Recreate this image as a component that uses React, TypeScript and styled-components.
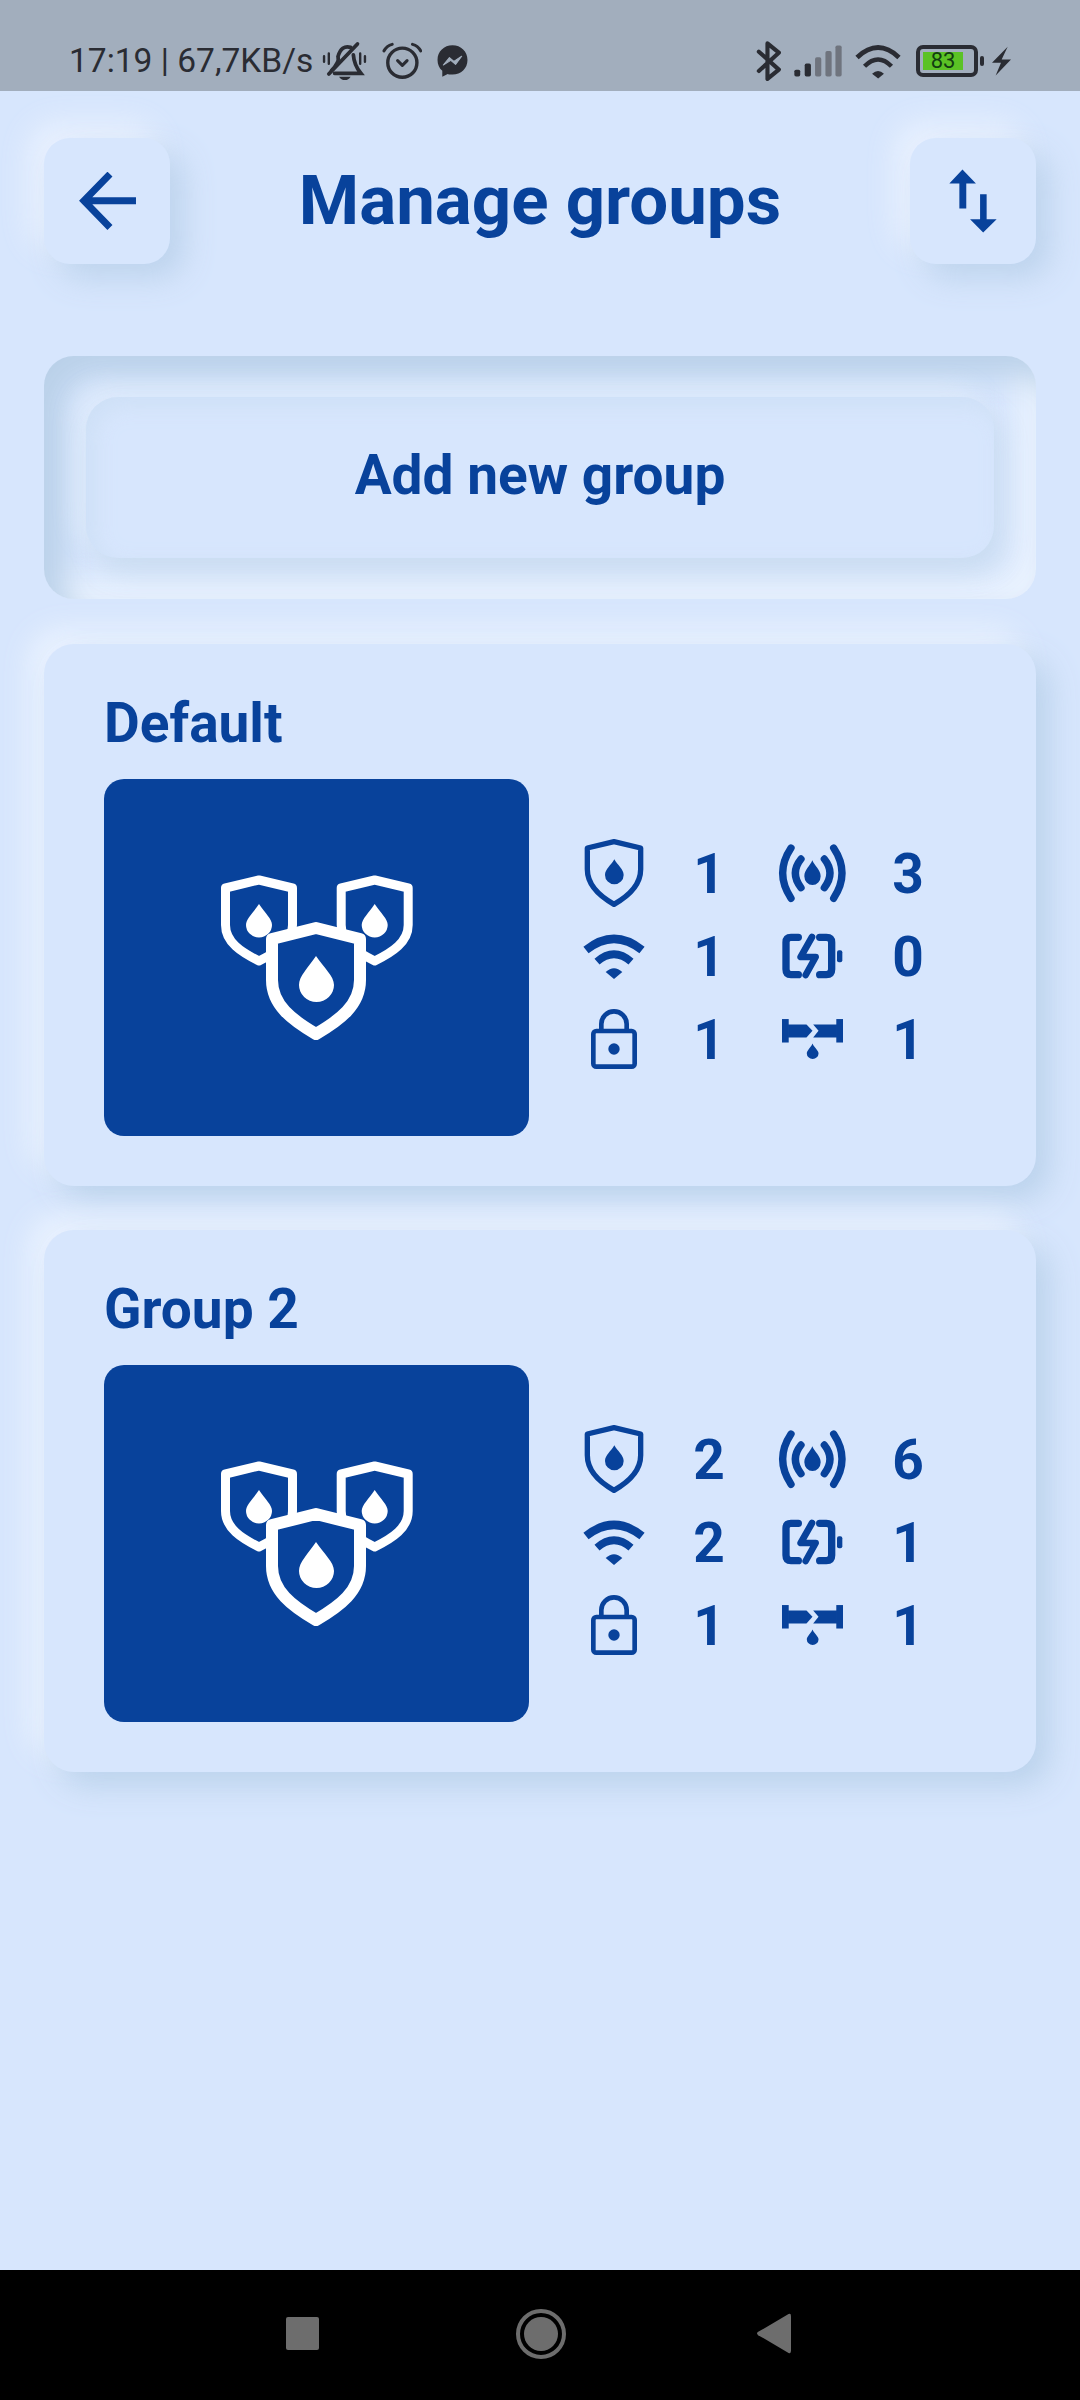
import styled, { createGlobalStyle } from "styled-components";

const BLUE = "#08429b";
const PAGE = "#d7e6fd";
const INK = "#2a2c33";

const GlobalStyle = createGlobalStyle`
    html, body {
        margin: 0;
        padding: 0;
        background: ${PAGE};
    }
    * {
        box-sizing: border-box;
    }
`

const Screen = styled.div`
    width: 1080px;
    height: 2400px;
    display: flex;
    flex-direction: column;
    background: ${PAGE};
    font-family: Roboto, "Liberation Sans", sans-serif;
    overflow: hidden;
`

const StatusBar = styled.div`
    height: 91px;
    flex: none;
    padding: 31px 69px 0 69px;
    display: flex;
    justify-content: space-between;
    align-items: center;
    background: #a2aebd;
    color: ${INK};
`

const StatusGroup = styled.div`
    display: flex;
    align-items: center;
`

const StatusText = styled.span`
    font-size: 33.5px;
    line-height: 40px;
    margin-right: 9px;
`

const StatusGlyph = styled.svg<{ $gap?: number }>`
    display: block;
    flex: none;
    margin-left: ${props => props.$gap ?? 0}px;
`

const Battery = styled.div`
    display: flex;
    align-items: center;
    margin-left: 15px;
`

const BatteryShell = styled.div`
    width: 62px;
    height: 32px;
    border: 4px solid ${INK};
    border-radius: 7px;
    display: flex;
    align-items: center;
    padding-left: 3px;
`

const BatteryFill = styled.div`
    width: 40px;
    height: 18px;
    background: #5bc225;
    color: #123c12;
    font-size: 22px;
    line-height: 18px;
    text-align: center;
`

const BatteryNub = styled.div`
    width: 4px;
    height: 10px;
    margin-left: 2px;
    border-radius: 2px;
    background: ${INK};
`

const Header = styled.div`
    margin: 47px 44px 0 44px;
    display: flex;
    justify-content: space-between;
    align-items: center;
`

const SquareButton = styled.div`
    width: 126px;
    height: 126px;
    display: flex;
    justify-content: center;
    align-items: center;
    border-radius: 26px;
    background: ${PAGE};
    box-shadow: 14px 14px 30px rgba(184, 208, 234, 0.85), -14px -14px 30px rgba(238, 245, 255, 0.85);
`

const PageTitle = styled.h1`
    margin: 0;
    font-size: 69px;
    line-height: 80px;
    font-weight: 700;
    color: ${BLUE};
`

const AddWell = styled.div`
    margin: 92px 44px 0 44px;
    height: 243px;
    padding: 41px 42px;
    border-radius: 30px;
    background: ${PAGE};
    box-shadow: inset 20px 20px 30px rgba(184, 208, 232, 0.95), inset -20px -20px 30px rgba(234, 242, 254, 0.95);
`

const AddButton = styled.div`
    height: 161px;
    padding-bottom: 5px;
    display: flex;
    justify-content: center;
    align-items: center;
    border-radius: 32px;
    background: ${PAGE};
    color: ${BLUE};
    font-size: 55px;
    font-weight: 700;
    box-shadow: inset 8px 8px 20px rgba(200, 220, 242, 0.6), 8px 14px 24px rgba(196, 216, 236, 0.7), -10px -10px 22px rgba(226, 238, 252, 0.7);
`

const CardList = styled.div`
    margin: 45px 44px 0 44px;
    display: flex;
    flex-direction: column;
    gap: 44px;
`

const Card = styled.div`
    height: 542px;
    padding: 49px 0 0 60px;
    border-radius: 30px;
    background: ${PAGE};
    box-shadow: 14px 14px 30px rgba(184, 208, 234, 0.9), -14px -14px 30px rgba(238, 245, 255, 0.9);
`

const CardTitle = styled.h2`
    margin: 0 0 26px;
    font-size: 55px;
    line-height: 60px;
    font-weight: 700;
    color: ${BLUE};
`

const CardBody = styled.div`
    display: flex;
    align-items: flex-start;
`

const GroupImage = styled.div`
    width: 425px;
    height: 357px;
    flex: none;
    display: flex;
    justify-content: center;
    align-items: center;
    border-radius: 20px;
    background: ${BLUE};
`

const StatsGrid = styled.div`
    margin: 52px 0 0 42px;
    display: grid;
    grid-template-columns: 86px 104px 102px 90px;
    grid-auto-rows: 83px;
    align-items: center;
    justify-items: center;
`

const StatValue = styled.span`
    padding-top: 3px;
    font-size: 55px;
    line-height: 80px;
    font-weight: 700;
    color: ${BLUE};
`

const NavBar = styled.div`
    margin-top: auto;
    height: 130px;
    flex: none;
    padding: 43px 289px 46px 286px;
    display: flex;
    justify-content: space-between;
    align-items: center;
    background: #000;
`

const NavSquare = styled.div`
    width: 33px;
    height: 33px;
    border-radius: 2px;
    background: #6d6d6d;
`

const NavHome = styled.div`
    width: 50px;
    height: 50px;
    margin-left: 6px;
    padding: 4px;
    border: 4px solid #6d6d6d;
    border-radius: 50%;
    background-clip: content-box;
    background-color: #6d6d6d;
`

const Shield: React.FC<{ d: string; drop: string; width: number }> = props => (<>
    <path d={props.d} fill={BLUE} stroke="#fff" strokeWidth={props.width} strokeLinejoin="round"/>
    <path d={props.drop} fill="#fff"/>
</>)

const GroupIcon = () => (<svg width="194" height="166" viewBox="40 55 194 166">
    <Shield width={9}
            d="M79 60 L112.5 68 V105 C112.5 122 97 132 79 141 C61 132 45.5 122 45.5 105 V68 Z"
            drop="M79 84 C73 93 66 99 66 105 A13 12.5 0 0 0 92 105 C92 99 85 93 79 84 Z"/>
    <Shield width={9}
            d="M194.7 60 L228.2 68 V105 C228.2 122 212.7 132 194.7 141 C176.7 132 161.2 122 161.2 105 V68 Z"
            drop="M194.7 84 C188.7 93 181.7 99 181.7 105 A13 12.5 0 0 0 207.7 105 C207.7 99 200.7 93 194.7 84 Z"/>
    <Shield width={12}
            d="M136 108 L180 119 V160 C180 185 160 200 136 214 C112 200 92 185 92 160 V119 Z"
            drop="M136 136 C128 148 119 156 119 165 A17.5 17 0 0 0 154 165 C154 156 144 148 136 136 Z"/>
</svg>)

// the stat icons are drawn in 3x units, so every svg is a third of its viewBox
const StatShield = () => (<svg width="60" height="70" viewBox="69 56 180 210">
    <path d="M159 67 L239 86 V150 C239 200 200 232 159 255 C118 232 79 200 79 150 V86 Z"
          fill="none" stroke={BLUE} strokeWidth="16" strokeLinejoin="round"/>
    <path d="M160 120 C150 138 132 150 132 167 A28 28 0 0 0 188 167 C188 150 170 138 160 120 Z" fill={BLUE}/>
</svg>)

const StatSensor = () => (<svg width="72" height="60" viewBox="645 70 216 180">
    <g fill="none" stroke={BLUE} strokeWidth="22" strokeLinecap="round">
        <path d="M690 85 Q640 160 690 236"/>
        <path d="M818 85 Q868 160 818 236"/>
        <path d="M720 118 Q686 160 720 204"/>
        <path d="M790 118 Q824 160 790 204"/>
    </g>
    <path d="M754 122 C748 138 730 150 730 170 A24.5 26 0 0 0 779 170 C779 150 760 138 754 122 Z" fill={BLUE}/>
</svg>)

const StatWifi = () => (<svg width="64" height="46" viewBox="64 344 192 138">
    <g fill="none" stroke={BLUE}>
        <path d="M76 395 Q160 328 244 395" strokeWidth="25"/>
        <path d="M109 430 Q160 386 211 430" strokeWidth="23"/>
    </g>
    <path d="M135 461 Q160 438 185 461 L160 482 Z" fill={BLUE}/>
</svg>)

const StatCharge = () => (<svg width="62" height="46" viewBox="670 342 186 138">
    <g fill="none" stroke={BLUE} strokeLinecap="round" strokeLinejoin="round">
        <path d="M722 355 H700 Q685 355 685 370 V451 Q685 467 700 467 H722" strokeWidth="22"/>
        <path d="M786 355 H806 Q822 355 822 370 V451 Q822 467 806 467 H786" strokeWidth="22"/>
        <path d="M763 354 L729 414 H774 L744 468" strokeWidth="20"/>
    </g>
    <rect x="838" y="394" width="16" height="36" rx="6" fill={BLUE}/>
</svg>)

const StatLock = () => (<svg width="46" height="60" viewBox="91 565 138 180">
    <g fill="none" stroke={BLUE} strokeWidth="14">
        <rect x="98" y="631" width="124" height="107" rx="9"/>
        <path d="M122 630 V610 A38 38 0 0 1 198 610 V630"/>
    </g>
    <circle cx="160" cy="685" r="17" fill={BLUE}/>
</svg>)

const StatLeak = () => (<svg width="61" height="40" viewBox="662 597 182 119">
    <g fill={BLUE}>
        <rect x="662" y="597" width="20" height="70"/>
        <rect x="824" y="597" width="20" height="70"/>
        <path d="M680 613 H735 L753 632 L735 652 H680 Z"/>
        <path d="M826 613 H755 L771 632 L755 652 H826 Z"/>
        <path d="M753 670 C747 684 736 690 736 700 A17.5 16 0 0 0 771 700 C771 690 759 684 753 670 Z"/>
    </g>
</svg>)

const BackIcon = () => (<svg width="57" height="58" viewBox="230 520 162 165">
    <path d="M392 602 H244 M318 526 L244 602 L318 678" fill="none" stroke={BLUE} strokeWidth="20"/>
</svg>)

const SortIcon = () => (<svg width="48" height="64" viewBox="1187 509 139 185">
    <path d="M1188 551 L1226 510 L1265 551 H1237 V623 H1217 V551 Z" fill={BLUE}/>
    <path d="M1277 582 H1296 V654 H1325 L1286 693 L1248 654 H1277 Z" fill={BLUE}/>
</svg>)

const BellOffIcon = () => (<StatusGlyph width="45" height="40" viewBox="938 120 132 116">
    <g fill="none" stroke={INK} strokeWidth="11" strokeLinecap="round">
        <path d="M966 206 Q990 180 985 165 Q995 130 1022 138"/>
        <path d="M1030 160 Q1032 190 1052 214 H975"/>
        <path d="M958 216 L1042 128"/>
        <path d="M958 156 V186 M944 164 V180 M1050 156 V186 M1064 164 V180" strokeWidth="7"/>
    </g>
    <path d="M988 224 H1022 Q1016 234 1005 234 Q994 234 988 224 Z" fill={INK}/>
</StatusGlyph>)

const AlarmIcon = () => (<StatusGlyph $gap={15} width="40" height="38" viewBox="1110 119 118 112">
    <g fill="none" stroke={INK} strokeLinecap="round" strokeLinejoin="round">
        <circle cx="1170" cy="180" r="43" strokeWidth="10"/>
        <path d="M1116 145 Q1124 130 1140 126 M1224 145 Q1216 130 1200 126" strokeWidth="9"/>
        <path d="M1156 174 L1170 188 L1184 174" strokeWidth="9"/>
    </g>
</StatusGlyph>)

const MessengerIcon = () => (<StatusGlyph $gap={15} width="31" height="32" viewBox="1274 131 90 94">
    <path d="M1319 132 C1294 132 1275 150 1275 175 C1275 188 1280 199 1289 207 V224 L1305 216 C1310 218 1314 218 1319 218 C1344 218 1363 200 1363 175 C1363 150 1344 132 1319 132 Z" fill={INK}/>
    <path d="M1292 190 L1310 168 L1323 179 L1346 164 L1328 188 L1314 176 Z" fill="#a2aebd" stroke="#a2aebd" strokeWidth="3" strokeLinejoin="round"/>
</StatusGlyph>)

const BluetoothIcon = () => (<StatusGlyph width="25" height="41" viewBox="625 117 72 119">
    <path d="M633 148 L691 200 L658 227 V124 L691 151 L633 204" fill="none" stroke={INK} strokeWidth="12" strokeLinecap="round" strokeLinejoin="round"/>
</StatusGlyph>)

const SignalIcon = () => (<StatusGlyph $gap={13} width="48" height="32" viewBox="738 133 139 92">
    <g>
        <rect x="739" y="204" width="17" height="20" rx="5" fill={INK}/>
        <rect x="769" y="186" width="18" height="38" rx="5" fill={INK}/>
        <rect x="799" y="168" width="18" height="56" rx="5" fill="#6f747e"/>
        <rect x="829" y="150" width="18" height="74" rx="5" fill="#6f747e"/>
        <rect x="858" y="134" width="18" height="90" rx="5" fill="#6f747e"/>
    </g>
</StatusGlyph>)

const WifiIcon = () => (<StatusGlyph $gap={13} width="46" height="35" viewBox="914 127 135 102">
    <g fill="none" stroke={INK}>
        <path d="M920 166 Q982 108 1043 166" strokeWidth="14"/>
        <path d="M942 192 Q982 152 1021 192" strokeWidth="13"/>
    </g>
    <path d="M964 214 Q982 198 999 214 L982 228 Z" fill={INK}/>
</StatusGlyph>)

const ChargeIcon = () => (<StatusGlyph $gap={8} width="19" height="30" viewBox="1311 132 57 89">
    <path d="M1358 134 L1340 172 H1368 L1322 220 L1338 182 H1311 Z" fill={INK}/>
</StatusGlyph>)

const NavBack = () => (<svg width="34" height="41" viewBox="0 0 28 37" preserveAspectRatio="none">
    <path d="M26 1 Q28 0 28 3 V34 Q28 37 26 36 L1 20 Q-1 18.500 1 17 Z" fill="#6d6d6d"/>
</svg>)

type GroupStats = { shields: number; sensors: number; wifi: number; charge: number; locks: number; leaks: number };

const GroupCard: React.FC<{ name: string; stats: GroupStats }> = props => (<Card>
    <CardTitle>{props.name}</CardTitle>
    <CardBody>
        <GroupImage><GroupIcon/></GroupImage>
        <StatsGrid>
            <StatShield/><StatValue>{props.stats.shields}</StatValue>
            <StatSensor/><StatValue>{props.stats.sensors}</StatValue>
            <StatWifi/><StatValue>{props.stats.wifi}</StatValue>
            <StatCharge/><StatValue>{props.stats.charge}</StatValue>
            <StatLock/><StatValue>{props.stats.locks}</StatValue>
            <StatLeak/><StatValue>{props.stats.leaks}</StatValue>
        </StatsGrid>
    </CardBody>
</Card>)

const App = () => (<Screen>
    <GlobalStyle/>
    <StatusBar>
        <StatusGroup>
            <StatusText>17:19 | 67,7KB/s</StatusText>
            <BellOffIcon/>
            <AlarmIcon/>
            <MessengerIcon/>
        </StatusGroup>
        <StatusGroup>
            <BluetoothIcon/>
            <SignalIcon/>
            <WifiIcon/>
            <Battery>
                <BatteryShell><BatteryFill>83</BatteryFill></BatteryShell>
                <BatteryNub/>
            </Battery>
            <ChargeIcon/>
        </StatusGroup>
    </StatusBar>
    <Header>
        <SquareButton><BackIcon/></SquareButton>
        <PageTitle>Manage groups</PageTitle>
        <SquareButton><SortIcon/></SquareButton>
    </Header>
    <AddWell>
        <AddButton>Add new group</AddButton>
    </AddWell>
    <CardList>
        <GroupCard name="Default" stats={{shields: 1, sensors: 3, wifi: 1, charge: 0, locks: 1, leaks: 1}}/>
        <GroupCard name="Group 2" stats={{shields: 2, sensors: 6, wifi: 2, charge: 1, locks: 1, leaks: 1}}/>
    </CardList>
    <NavBar>
        <NavSquare/>
        <NavHome/>
        <NavBack/>
    </NavBar>
</Screen>)

export default App
